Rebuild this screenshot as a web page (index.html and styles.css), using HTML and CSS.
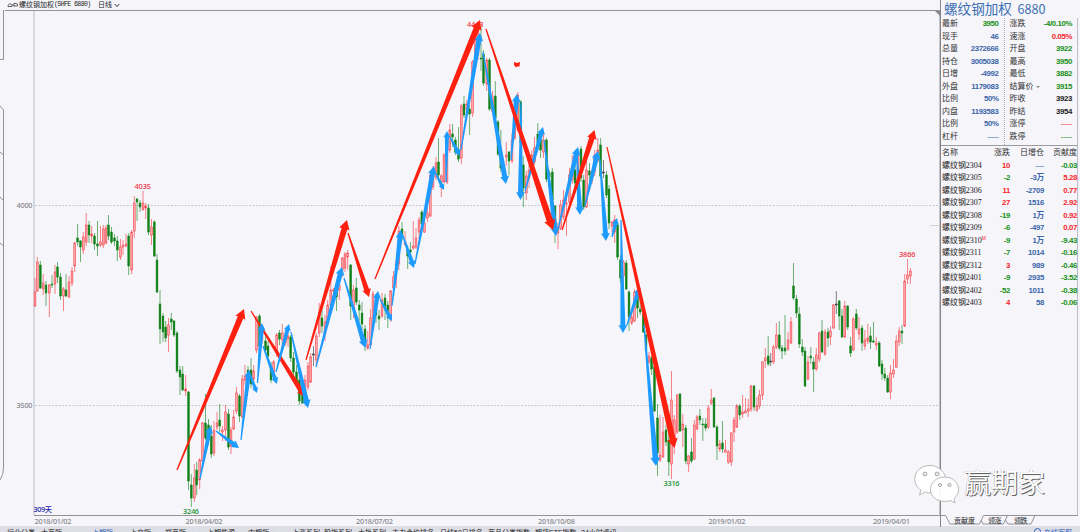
FILE: index.html
```
<!DOCTYPE html>
<html lang="zh-CN">

<head>
    <meta charset="UTF-8">
    <title>螺纹钢加权 6880</title>
    <link rel="stylesheet" href="styles.css">
</head>

<body>
    <div class="layout">
        <div class="left">
            <header class="topbar">
                <svg class="link-icon" width="12" height="6" viewBox="0 0 12 6">
                    <path d="M1 4.5H5V3L3 1.5L1 3.2ZM7 4.5V1.2L10.5 2V4H7M5 3H7" />
                </svg>
                <span class="name">螺纹钢加权</span><span class="code">(SHFE 6880)</span>
                <span class="period">日线</span>
                <svg width="6" height="5" viewBox="0 0 6 5"><path class="caret" d="M0.7 1L3 3.6L5.3 1" /></svg>
            </header>
            <svg id="chart" class="chart" width="940" height="517" viewBox="0 10 940 517">
                <path class="frame" d="M5 10.5H940M34 515.5H940M940 10V515.5" />
                <path class="axis" d="M34 11V515" />
                <path class="frame" d="M3.5 10V59.5H0M0 106L3.5 110V468Q3.5 475 0 480M0 152L3.5 155M0 197L3.5 200.5M0 243L3.5 246" />
                <path class="grid" d="M35 205.5H939M35 405.5H939" />
                <path class="cursor" d="M930 225.5H940" />
                <path class="corner" d="M935 11H940V16Z" />
                <g id="candles"></g>
                <g class="gray">
                    <text x="16.5" y="208.2" textLength="16">4000</text>
                    <text x="16.5" y="408.2" textLength="16">3500</text>
                    <text x="34.5" y="523.6" textLength="37">2018/01/02</text>
                    <text x="185.5" y="523.6" textLength="37">2018/04/02</text>
                    <text x="356" y="523.6" textLength="37">2018/07/02</text>
                    <text x="538" y="523.6" textLength="37">2018/10/08</text>
                    <text x="708.5" y="523.6" textLength="37">2019/01/02</text>
                    <text x="873" y="523.6" textLength="37">2019/04/01</text>
                </g>
                <text class="t-red" x="134.5" y="189" textLength="16.5">4035</text>
                <text class="t-red" x="467" y="27" textLength="16.5">4443</text>
                <text class="t-red" x="899" y="256.7" textLength="16.5">3866</text>
                <text class="t-green" x="183" y="513.8" textLength="16">3246</text>
                <text class="t-green" x="663.5" y="485.8" textLength="16">3316</text>
                <text class="t-navy" x="33.5" y="512.4" textLength="18.5">309天</text>
                <g id="arrows"></g>
                <path class="red" d="M514 62L517 63L520 62L519.500 66.500H517L516 67.500L514 65Z" />
            </svg>
        </div>

        <aside class="panel">
            <h1>螺纹钢加权 <span>6880</span></h1>
            <div class="quote">
                <div class="col">
                    <div><label>最新</label><b class="g">3950</b></div>
                    <div><label>现手</label><b class="b">46</b></div>
                    <div><label>总量</label><b class="b">2372666</b></div>
                    <div><label>持仓</label><b class="b">3005038</b></div>
                    <div><label>日增</label><b class="b">-4992</b></div>
                    <div><label>外盘</label><b class="b">1179083</b></div>
                    <div><label>比例</label><b class="b">50%</b></div>
                    <div><label>内盘</label><b class="b">1193583</b></div>
                    <div><label>比例</label><b class="b">50%</b></div>
                    <div><label>杠杆</label><b class="b thin">-----</b></div>
                </div>
                <div class="col second">
                    <div><label>涨跌</label><b class="g">-4/0.10%</b></div>
                    <div><label>速涨</label><b class="r">0.05%</b></div>
                    <div><label>开盘</label><b class="g">3922</b></div>
                    <div><label>最高</label><b class="g">3950</b></div>
                    <div><label>最低</label><b class="g">3882</b></div>
                    <div><label>结算价<i class="drop"></i></label><b class="g">3915</b></div>
                    <div><label>昨收</label><b>3923</b></div>
                    <div><label>昨结</label><b>3954</b></div>
                    <div><label>涨停</label><b class="r thin">-----</b></div>
                    <div><label>跌停</label><b class="g thin">-----</b></div>
                </div>
            </div>
            <table>
                <tr><th>名称</th><th>涨跌</th><th>日增仓</th><th>贡献度</th></tr>
                <tr><td>螺纹钢2304</td><td class="r">10</td><td class="b thin">----</td><td class="g">-0.03</td></tr>
                <tr><td>螺纹钢2305</td><td class="g">-2</td><td class="b">-3万</td><td class="r">5.28</td></tr>
                <tr><td>螺纹钢2306</td><td class="r">11</td><td class="b">-2709</td><td class="r">0.77</td></tr>
                <tr><td>螺纹钢2307</td><td class="r">27</td><td class="b">1516</td><td class="r">2.92</td></tr>
                <tr><td>螺纹钢2308</td><td class="g">-19</td><td class="b">1万</td><td class="r">0.92</td></tr>
                <tr><td>螺纹钢2309</td><td class="g">-6</td><td class="b">-497</td><td class="r">0.07</td></tr>
                <tr><td>螺纹钢2310<sup>M</sup></td><td class="g">-9</td><td class="b">1万</td><td class="g">-9.43</td></tr>
                <tr><td>螺纹钢2311</td><td class="g">-7</td><td class="b">1014</td><td class="g">-0.16</td></tr>
                <tr><td>螺纹钢2312</td><td class="r">3</td><td class="b">989</td><td class="g">-0.46</td></tr>
                <tr><td>螺纹钢2401</td><td class="g">-9</td><td class="b">2935</td><td class="g">-3.52</td></tr>
                <tr><td>螺纹钢2402</td><td class="g">-52</td><td class="b">1011</td><td class="g">-0.38</td></tr>
                <tr><td>螺纹钢2403</td><td class="r">4</td><td class="b">58</td><td class="g">-0.06</td></tr>
            </table>
            <svg class="tabs" width="138" height="12" viewBox="940 515 138 12">
                <path class="frame" d="M940 515.5H945.5L950 524H979.500L983.500 515.5H1078M981 520L983 524H1003.500L1007.500 515.5M1005.500 520L1008 524H1031L1035 515.5" />
                <text x="954" y="522.8" textLength="21">贡献度</text>
                <text x="988" y="522.8" textLength="13.500">领涨</text>
                <text x="1014" y="522.8" textLength="13.500">领跌</text>
            </svg>
        </aside>
    </div>

    <footer class="markets">
        <span>行业分类</span><span>大商所▪▪▪▪</span><span class="on">上期所▪▪▪</span><span>上交所▪▪</span><span>郑商所▪▪▪</span><span>上期能源▪</span><span>中期所▪▪▪</span><span>上涨系列</span><span>股指系列</span><span>大批系列</span><span>主力合约排名</span><span>日线50日排名</span><span>商品分类指数</span><span>期货ETF指数</span><span>24小时资讯</span>
        <span class="on service"><i></i>在线客服</span>
    </footer>

    <div class="watermark">
        <svg width="46" height="40" viewBox="914 462 46 40">
            <path d="M930 463.500C921 463.500 914.800 469.500 914.800 477C914.800 481.500 917 485.500 921 488L919.500 493L925 490C929 491.500 934 491 938 489C944 486 946.500 481 945.500 475.500C944 468.500 937.500 463.500 930 463.500Z" />
            <path d="M944.500 475C936.500 475 930.500 480.500 930.500 487.500C930.500 494.500 937 499.500 944.500 499.500C946.500 499.500 948.500 499.200 950.200 498.500L955 501L954 496.500C957 494.300 958.600 491 958.600 487.500C958.600 480.500 952.500 475 944.500 475Z" />
            <g class="eyes"><circle cx="925" cy="472" r="1.900" /><circle cx="937" cy="472" r="1.900" /><circle cx="940" cy="483" r="1.600" /><circle cx="949.500" cy="483" r="1.600" /></g>
        </svg>
        <span>赢期家</span>
    </div>

    <script src="chart.js"></script>
</body>

</html>
```
FILE: styles.css
```
* {
    margin: 0;
    padding: 0;
    box-sizing: border-box;
}

body {
    width: 1080px;
    height: 532px;
    overflow: hidden;
    position: relative;
    background: #f5f5fa;
    color: #333;
    font-family: "Liberation Sans", "Noto Sans CJK SC", sans-serif;
    font-size: 8px;
}

svg {
    display: block;
}

.layout {
    display: flex;
    height: 527px;
}

.left {
    width: 940px;
}

.topbar {
    height: 10px;
    padding-left: 7px;
    display: flex;
    align-items: center;
    font-size: 7px;
    line-height: 10px;
    white-space: nowrap;
    color: #222;
}

.link-icon path {
    fill: none;
    stroke: #444;
    stroke-width: 0.8;
}

.code {
    width: 37px;
    font-family: "Liberation Mono", monospace;
    font-size: 6.6px;
    letter-spacing: -0.62px;
}

.period {
    margin: 0 2px 0 7px;
}

.caret {
    fill: none;
    stroke: #333;
}

.chart {
    overflow: visible;
}

.chart text {
    font-family: "Noto Sans", "Noto Sans CJK SC", sans-serif;
    font-size: 7.3px;
    font-weight: 500;
}

.frame {
    fill: none;
    stroke: #929298;
    stroke-width: 1;
}

.axis {
    stroke: #d8d8df;
    stroke-width: 2;
}

.grid {
    stroke: #c9c9cf;
    stroke-dasharray: 2 1.4;
}

.cursor {
    stroke: #d2d2d8;
}

.corner {
    fill: #88888e;
}

.gray {
    fill: #85858b;
}

.t-red {
    fill: #f0323c;
}

.t-green {
    fill: #16902a;
}

.t-navy {
    fill: #2222a8;
}

.red {
    fill: #ff2010;
}

.blue {
    fill: #1e9bff;
}

.panel {
    width: 138px;
    border-left: 1px solid #85858b;
    position: relative;
}

.panel h1 {
    height: 18px;
    padding-left: 3px;
    font-size: 13.6px;
    font-weight: normal;
    line-height: 17px;
    color: #3d6fb3;
    white-space: nowrap;
    font-family: "Noto Sans CJK SC", sans-serif;
}

.panel h1 span {
    margin-left: 2.5px;
    font-size: 12.6px;
}

.quote {
    display: flex;
    height: 128px;
    border-bottom: 1px solid #9a9aa0;
    border-right: 1px solid #bdbdc4;
}

.col {
    width: 63px;
    padding: 0 5px 0 1px;
}

.col.second {
    width: 74px;
    padding: 0 5px;
    border-left: 1px dotted #aaa;
}

.col div {
    display: flex;
    justify-content: space-between;
    height: 12.5px;
    line-height: 12.5px;
    white-space: nowrap;
}

b,
td {
    font-size: 7.8px;
    font-weight: bold;
    letter-spacing: -0.36px;
    color: #222;
}

.b {
    color: #3a66a8;
}

.g {
    color: #159015;
}

.r {
    color: #fa1e2a;
}

.thin {
    font-weight: normal;
}

.drop {
    display: inline-block;
    margin: 0 0 1px 2px;
    border: 2.5px solid transparent;
    border-top: 2px solid #888;
    border-bottom: 0;
}

table {
    width: 137px;
    height: 369px;
    padding-top: 1.4px;
    display: block;
    border-right: 1px solid #bdbdc4;
    border-spacing: 0;
}

tr {
    display: flex;
    height: 12.5px;
    line-height: 12.5px;
    white-space: nowrap;
}

th {
    font-weight: normal;
}

th,
td {
    width: 33px;
    text-align: right;
}

th:first-child,
td:first-child {
    width: 44px;
    padding-left: 1px;
    text-align: left;
}

th:nth-child(2),
td:nth-child(2) {
    width: 25px;
}

th:nth-child(3),
td:nth-child(3) {
    width: 34px;
}

td:first-child {
    font: 8px/12.5px "Liberation Serif", "Noto Sans CJK SC", serif;
    letter-spacing: -0.05px;
}

sup {
    font: 5px/5px "Liberation Sans", sans-serif;
    color: #fa1e2a;
    vertical-align: 3px;
}

.tabs {
    margin-left: -1px;
}

.tabs text {
    font-size: 7px;
    fill: #222;
}

.markets {
    height: 6px;
    margin-top: -1px;
    padding: 2px 8px 0 7px;
    display: grid;
    grid-template-columns: 34px 51px 38px 35px 42px 41px 44px 32px 34px 34px 48px 48px 47px 46px 60px 1fr;
    overflow: hidden;
    background: #dedfe6;
    color: #222;
    font-size: 7px;
    line-height: 10px;
    white-space: nowrap;
}

.markets .on {
    color: #2c62b5;
}

.markets .service {
    text-align: right;
}

.service i {
    display: inline-block;
    width: 7px;
    height: 7px;
    margin-right: 3px;
    border: 1px solid #2c62b5;
    border-radius: 50%;
    vertical-align: top;
}

.watermark {
    position: absolute;
    left: 914px;
    top: 462px;
    display: flex;
    align-items: center;
    gap: 4px;
    font: 27px/40px "Noto Sans CJK SC", sans-serif;
    color: #fff;
}

.watermark span {
    height: 43px;
    text-shadow: 1px 1px 0.5px #666, -0.5px -0.5px 0.5px #aaa;
}

.watermark path {
    fill: #fff;
    fill-opacity: 0.93;
    stroke: #aaa;
    stroke-width: 0.8;
}

.eyes {
    fill: #eee;
    stroke: #888;
    stroke-width: 0.7;
}
```
FILE: chart.js
```
// x, high, body top, body bottom, low, colour
const candles = `
35 278 292 306 307 r;37.3 257 262 291 292 r;40.3 261 265 288 289 g;43.2 274 283 289 295 r;46 281 285 293 306 g;49.3 284 285 293 317 r;52 275 284 285 288 g;55 265 272 284 294 r
57.5 262 267 277 283 g;60.5 273 277 296 300 g;63.5 287 289 296 311 r;66 274 290 296 297 g;69 276 282 297 298 r;72 267 271 283 286 r;74.7 242 243 266 272 r;77.6 224 238 242 246 g
80.5 240 241 247 262 g;83.3 232 237 250 254 r;86.2 213 225 242 246 r;89 221 225 235 243 g;91.7 226 234 236 243 r;94.5 233 236 244 250 g;97.5 221 244 246 256 g;100.5 226 242 245 247 r
103.3 225 229 245 248 r;106 225 228 243 244 r;108.5 215 225 236 240 g;111.5 227 232 242 244 g;114.5 234 238 241 246 g;117.3 236 241 250 261 g;120.5 239 247 257 260 r;123 240 245 247 255 r
126 234 244 246 247 r;128.7 233 236 266 275 g;131.7 230 232 270 274 r;134.3 196 203 231 238 r;137 198 199 202 221 g;140 200 203 207 212 g;143 191 203 210 210 r;145.7 203 206 208 219 r
148.5 204 208 232 235 g;151.5 219 227 235 245 r;154.3 220 222 256 257 g;157 254 260 292 293 g;160 290 304 329 344 g;163 313 316 332 342 g;165.7 321 327 338 342 g;168.5 318 325 335 352 r
171.3 313 319 322 330 g;174 320 321 335 337 g;177 331 333 371 373 g;180 366 370 377 395 g;182.7 366 374 390 391 g;185.7 375 389 391 396 r;188.5 391 392 481 490 g;191.3 474 485 498 507 g
194.3 464 478 498 502 r;196.7 462 470 485 495 g;199.7 458 460 480 489 r;202.5 422 423 461 465 r;205.5 394 423 438 440 g;208.5 419 425 437 445 g;211.3 425 436 454 458 g;214 421 430 453 456 r
217 412 423 427 430 r;219.7 404 420 426 432 g;222.5 426 430 432 441 r;225.5 405 412 430 441 r;228.5 409 414 447 450 g;231 427 430 446 454 r;233.7 410 417 429 430 r;236.5 387 393 411 414 r
239.5 394 396 416 422 g;242.3 375 379 417 418 r;245 365 376 380 385 r;248 366 370 378 380 g;251 358 370 384 388 g;253.7 365 371 379 385 r;256.5 316 317 350 353 r;259.5 314 316 346 348 g
262 330 334 340 344 r;265.5 334 341 350 352 g;268 341 346 356 360 g;271 362 366 380 383 g;273.7 360 362 372 378 r;276.7 333 335 353 357 r;279.5 330 333 339 345 g;282.3 324 333 340 348 r
285.3 330 336 343 346 r;288 333 336 339 347 r;290.7 335 337 358 362 g;293.5 352 358 372 378 g;296.5 365 372 384 387 g;299.3 375 380 401 405 g;302.5 382 390 403 404 g;305 375 380 393 400 r
308 362 366 387 390 r;310.7 353 357 382 383 r;313.5 346 354 355 366 k;316.3 333 336 360 365 r;319.2 303 312 333 337 r;322 308 318 326 333 g;325 315 322 334 341 r;327.7 300 305 323 325 r
330.8 266 290 305 309 r;333.5 288 290 291 297 r;336.5 289 291 297 311 g;339.3 280 285 290 300 r;342.3 257 258 270 277 r;345 252 254 268 272 r;347.7 250 253 257 270 r;350.7 264 265 306 320 g
353.5 285 290 308 318 r;356.3 278 288 302 305 g;359.2 300 305 310 321 g;362 302 313 324 330 g;365 325 329 345 351 g;367.8 331 345 348 350 r;370.5 309 318 345 347 r;373 291 294 318 328 r
376 295 300 315 323 g;379 310 316 319 330 g;382 293 300 316 318 r;385 294 298 306 320 g;387.8 301 305 311 328 g;390.7 290 291 316 322 r;393.5 271 277 288 290 r;396.3 260 263 270 288 r
398.9 226 231 264 270 r;402 222 229 238 240 g;405 231 242 244 246 r;407.7 245 250 256 269 g;410.5 242 250 252 257 g;413.3 221 246 248 250 r;416 228 238 247 249 r;419 217 220 232 239 r
421.8 210 212 224 230 g;424.5 216 223 232 233 r;427.5 195 213 218 222 r;430.3 173 175 216 217 r;433 166 175 187 190 r;436 157 163 177 180 r;438.5 138 162 175 182 g;441.3 174 176 182 197 r
444 153 155 182 183 r;447 138 140 182 184 r;449.8 124 130 150 153 r;452.6 124 134 137 147 g;455.4 137 140 152 155 g;458.5 127 150 159 162 g;461.3 104 106 158 164 r;464 96 104 115 118 g
466.8 100 104 110 113 r;469.6 105 109 114 135 g;472.6 60 62 113 117 r;475.3 32 40 64 66 r;478 28 30 55 60 r;481 26 58 59 71 g;483.5 50 54 83 86 g;486.8 58 60 84 91 r
489.5 58 60 109 111 g;492.5 91 97 111 113 r;495.3 81 96 118 125 g;498 120 122 154 156 g;500.8 130 150 168 172 g;503.5 160 165 170 172 r;506.3 142 155 157 166 r;509 151 152 161 175 g
512 133 140 161 163 r;514.8 105 110 138 140 r;517.8 92 95 130 132 r;520.8 100 102 143 151 g;523.3 156 165 188 207 g;526.3 171 176 193 200 r;529 165 170 178 188 r;531.8 150 155 170 172 r
534.5 137 148 162 165 r;537.8 123 134 143 148 g;540.6 130 137 150 158 g;543.5 130 140 152 158 r;546.5 138 140 179 182 g;549.2 170 173 177 180 g;552.3 168 172 200 205 g;555 205 206 232 243 g
558 222 227 233 249 r;560.5 200 205 228 230 r;563.5 190 200 217 220 r;566.5 198 203 204 236 r;569.5 168 175 202 205 r;572.3 155 172 180 184 r;575 160 170 183 188 g;578 150 155 185 188 r
581 146 149 178 182 g;583.7 175 180 207 210 g;586.5 160 170 207 208 r;589.5 163 171 175 184 g;592 170 172 180 184 r;594.7 150 155 172 176 r;597.8 138 150 161 162 r;600.6 138 145 176 178 g
603.5 160 172 173 178 k;606.5 171 175 195 198 g;609 185 189 223 229 g;612 221 222 226 232 r;614.7 215 220 232 243 r;617.6 222 225 257 260 g;620.4 255 260 278 283 g;623.4 260 262 276 285 r
626.2 260 263 289 290 g;629 290 292 317 331 g;631.8 313 317 323 325 r;634.5 289 292 321 322 r;637.5 291 297 308 318 g;640.2 300 309 312 315 g;643.3 312 314 332 333 g;646 330 335 350 355 g
649 352 356 362 364 r;651.6 356 358 369 375 g;654.5 362 367 411 412 g;657.5 404 418 453 476 g;660 415 455 460 462 r;663 417 432 457 458 r;666 425 430 442 446 g;668.8 430 440 462 476 g
671.5 371 400 464 479 r;674.3 415 420 440 454 r;677.2 394 395 432 434 r;680 393 394 431 432 g;682.8 414 424 430 447 r;685.8 425 428 461 464 g;688.6 455 456 464 472 r;691.5 438 452 461 463 g
694.3 420 425 459 460 r;697 415 417 429 430 r;699.9 409 416 420 425 g;702.8 418 424 425 441 g;705.7 418 424 428 431 g;708.3 405 408 427 429 r;711.3 389 400 403 405 r;714 397 398 427 428 g
717 425 427 446 460 g;719.8 440 444 449 452 r;722.5 421 443 449 453 g;725.5 440 450 452 453 r;728.4 450 452 462 464 r;731.3 432 433 462 466 r;734 417 420 432 442 r;736.8 404 406 427 428 r
739.7 404 406 415 420 g;742.6 395 412 414 418 r;745.5 398 411 413 413 r;748.3 399 409 411 417 r;751 385 386 409 412 r;754 385 386 407 411 g;756.9 397 406 410 412 r;759.5 390 395 406 409 r
762.5 361 362 395 400 r;765.3 348 358 361 368 r;768.2 336 356 364 366 g;770.7 353 361 362 366 k;773.5 345 347 362 364 r;776.4 323 335 347 349 r;779.3 321 335 348 350 g;782 345 348 351 359 g
785 315 348 351 355 g;788 332 340 349 351 r;791 317 322 343 344 r;793.5 263 286 298 300 g;796.5 295 299 313 318 g;799.3 307 314 344 348 g;802.3 339 347 352 356 g;805 347 351 386 387 g
808 356 362 379 380 r;810.8 347 356 358 364 g;813.6 357 362 369 392 g;816.3 348 355 369 371 r;819.3 332 333 359 362 r;822 320 331 352 353 g;825 329 332 354 356 r;828 328 332 338 347 g
830.5 326 331 337 345 r;833.5 304 305 328 329 r;836.3 291 304 305 314 k;839.2 300 301 316 330 g;842 309 316 337 338 g;844.8 301 306 337 338 r;847.7 305 306 327 330 g;850.6 337 346 353 357 g
853.3 317 319 350 351 r;856.3 309 314 328 330 g;859 317 329 334 340 r;862 325 328 343 351 g;864.9 330 340 346 350 r;867.8 324 338 341 344 r;870.5 327 336 342 349 g;873.5 322 341 342 343 g
876.3 337 343 345 350 r;879.2 341 343 366 367 g;882 360 364 374 380 g;884.8 368 374 378 381 g;887.7 375 378 392 393 g;890.5 365 373 392 399 r;893.5 359 370 374 378 r;896.3 335 341 367 368 r
899.2 327 331 342 346 r;902 325 331 333 344 g;904.7 274 281 326 327 r;907.5 259 275 279 284 r;910.4 268 271 276 284 r`;

const colors = { r: '#f5333a', g: '#108018', k: '#333' };

document.getElementById('candles').innerHTML = candles.trim().split(/[;\n]/).map(row => {
    const [x, high, top, bottom, low, c] = row.split(' ');
    const fill = c === 'r' ? '#fba6a9' : colors[c];
    return `<path d="M${x} ${high}V${low}" stroke="${colors[c]}" stroke-opacity="0.6"/>` +
        `<rect x="${x - 0.9}" y="${top}" width="1.8" height="${Math.max(bottom - top, 1)}" fill="${fill}" stroke="${colors[c]}" stroke-width="0.5"/>`;
}).join('');

// start x, start y, tip x, tip y, colour, shaft width
const arrows = [
    [251, 311, 305, 397, 'red', 5],
    [200, 479, 210.5, 426, 'blue', 4.5], [216, 431, 239, 448, 'blue', 4.5],
    [241, 440, 249, 370, 'blue', 4.5], [249, 372, 257, 393, 'blue', 3.5],
    [257.5, 383, 262, 323, 'blue', 4.5], [263, 346, 277, 384, 'blue', 4],
    [276, 372, 289, 324, 'blue', 4], [291, 332, 308, 408, 'blue', 5],
    [316, 367, 342, 267, 'blue', 5], [344, 278, 365.5, 348, 'blue', 5],
    [370, 349, 378, 291, 'blue', 4.5], [380, 299, 392, 321, 'blue', 4],
    [392, 306, 401, 230, 'blue', 5], [403, 236, 414, 268, 'blue', 4.5],
    [415, 264, 434, 166, 'blue', 5], [435, 172, 444, 190, 'blue', 3.5],
    [446, 182, 447, 131, 'blue', 4], [450, 137, 460, 156, 'blue', 4],
    [461, 150, 480, 33, 'blue', 5], [483, 52, 506, 184, 'blue', 5],
    [511, 160, 517, 94, 'blue', 5], [521, 103, 520.5, 200, 'blue', 5],
    [525, 191, 543, 127, 'blue', 4.5], [544, 140, 556, 236, 'blue', 5],
    [558, 229, 578, 147, 'blue', 5], [577, 155, 580, 215, 'blue', 5],
    [585, 206, 598, 151, 'blue', 5], [600, 160, 606, 241, 'blue', 5],
    [612, 237, 617, 218, 'blue', 4], [621, 220, 623, 333, 'blue', 5],
    [627, 325, 640, 287, 'blue', 4.5], [644, 325, 656, 466, 'blue', 5.5],
    [177, 470, 244, 309, 'red', 6], [306, 360, 347, 220, 'red', 6],
    [348, 233, 369, 297, 'red', 5], [375, 279, 480, 20, 'red', 6],
    [486, 29, 553, 230, 'red', 6.5], [562, 230, 594.5, 130, 'red', 5.5],
    [607, 147, 674.5, 448, 'red', 6]
];

document.getElementById('arrows').innerHTML = arrows.map(([x1, y1, x2, y2, color, w]) => {
    const len = Math.hypot(x2 - x1, y2 - y1);
    const ux = (x2 - x1) / len, uy = (y2 - y1) / len;
    const head = w * 1.5;
    const at = (d, side) => `${(x1 + ux * d - uy * side).toFixed(1)},${(y1 + uy * d + ux * side).toFixed(1)}`;
    const end = len - head;
    return `<polygon class="${color}" points="${at(0, 0.6)} ${at(end, w / 2)} ${at(end - 0.5, w * 0.9)} ${at(len, 0)} ${at(end - 0.5, -w * 0.9)} ${at(end, -w / 2)} ${at(0, -0.6)}"/>`;
}).join('');
```
